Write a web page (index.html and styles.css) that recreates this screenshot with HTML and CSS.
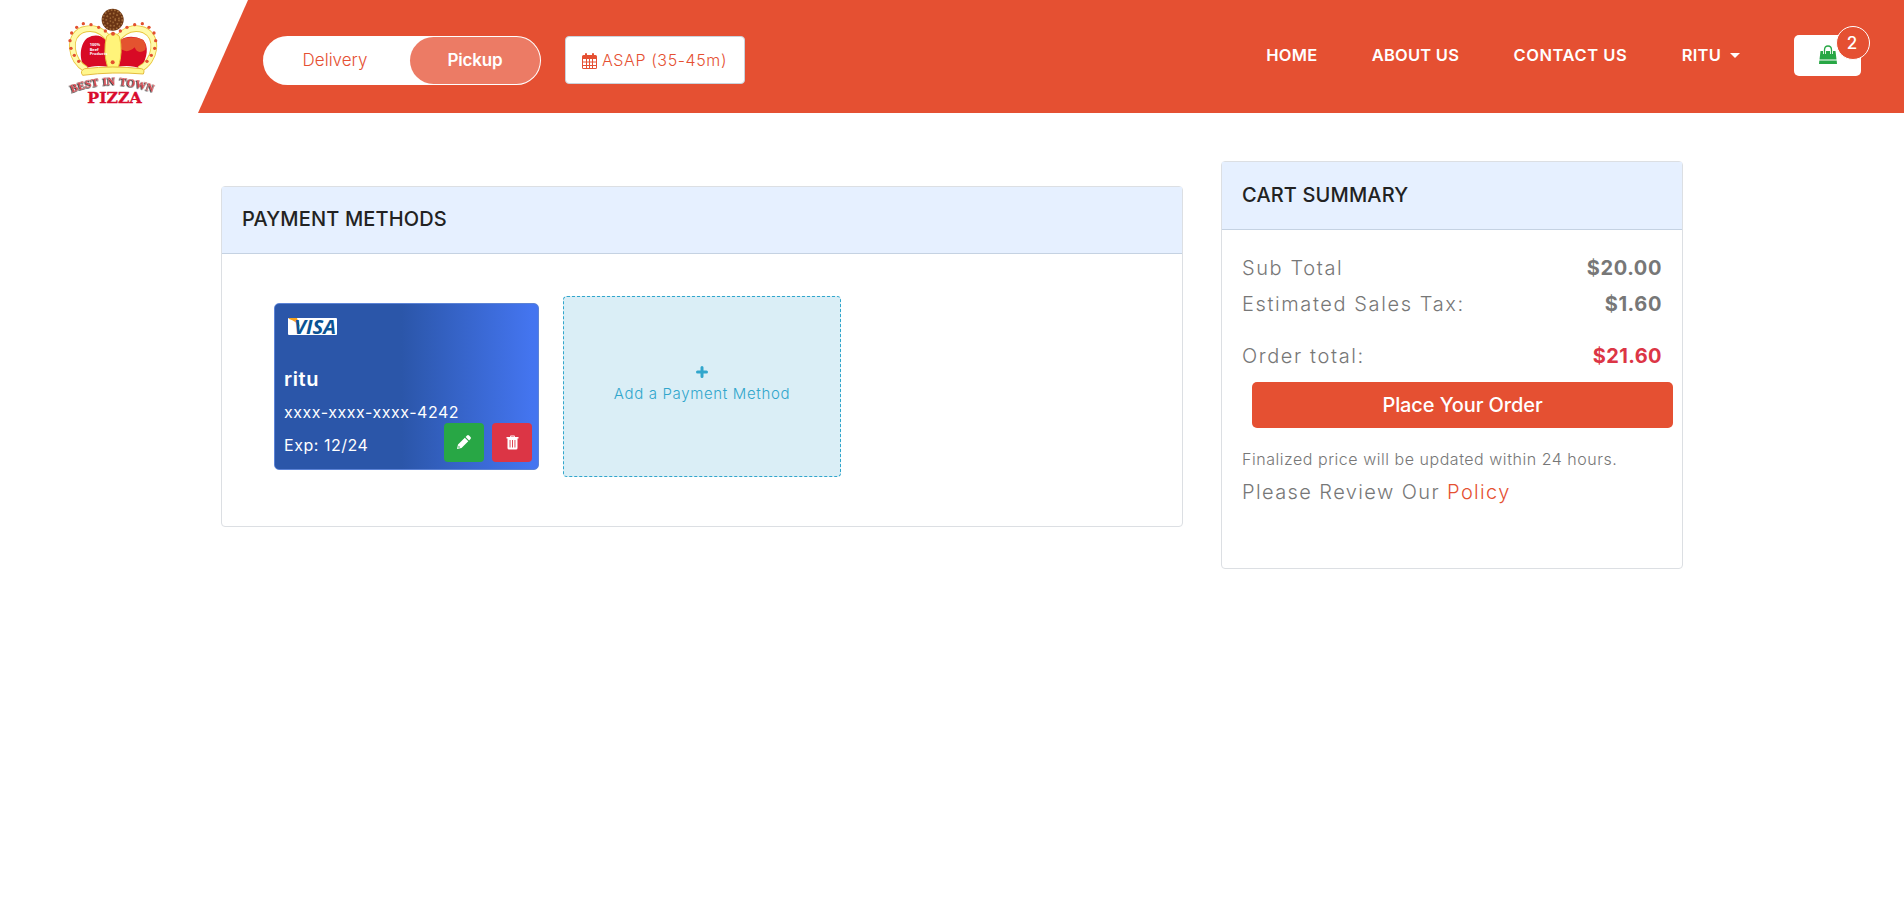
FILE: index.html
```html
<!DOCTYPE html>
<html lang="en">
<head>
<meta charset="utf-8">
<title>Payment Methods</title>
<link rel="stylesheet" href="styles.css">
</head>
<body>
<header class="topbar">
  <a class="logo">
    <svg width="130" height="113" viewBox="0 0 390 339">
      <circle cx="188" cy="59" r="33" fill="#6b3514"/>
      <circle cx="188" cy="59" r="29" fill="none" stroke="#a06a38" stroke-width="5" stroke-dasharray="5 5"/>
      <circle cx="188" cy="59" r="19" fill="none" stroke="#a06a38" stroke-width="5" stroke-dasharray="5 6"/>
      <circle cx="188" cy="59" r="8" fill="none" stroke="#a06a38" stroke-width="5" stroke-dasharray="4 5"/>
      <path d="M104 206 C84 170 92 130 112 114 Q145 96 170 122 L174 200 Q130 194 104 206Z" fill="#d80a25"/>
      <path d="M272 206 C294 170 296 140 280 120 Q240 100 207 122 L203 200 Q245 194 272 206Z" fill="#d80a25"/>
      <path d="M208 120 Q240 104 276 118 Q292 130 286 150 Q262 165 254 142 Q230 165 206 142Z" fill="#e4532f"/>
      <path d="M108 208 C60 180 52 110 96 90 Q150 72 184 128 M268 208 C318 182 328 112 282 90 Q230 72 194 128" fill="none" stroke="#e9c53c" stroke-width="20"/>
      <path d="M108 208 C60 180 52 110 96 90 Q150 72 184 128 M268 208 C318 182 328 112 282 90 Q230 72 194 128" fill="none" stroke="#fffaa8" stroke-width="15"/>
      <path d="M170 109 Q189 90 208 109 Q220 155 205 202 L173 202 Q158 155 170 109Z" fill="#fff47a" stroke="#e9c53c" stroke-width="3"/>
      <path d="M104 206 Q188 196 274 206 Q286 209 280 222 Q188 214 98 226 Q88 213 104 206Z" fill="#fff68c" stroke="#e5bc3e" stroke-width="3"/>
      <g fill="#e2502e"><circle cx="189" cy="101" r="6"/><circle cx="188" cy="187" r="6"/><circle cx="166" cy="93" r="5"/><circle cx="146" cy="82" r="5"/><circle cx="123" cy="74" r="5"/><circle cx="100" cy="71" r="5"/><circle cx="80" cy="82" r="5"/><circle cx="65" cy="99" r="5"/><circle cx="60" cy="122" r="5"/><circle cx="63" cy="145" r="5"/><circle cx="73" cy="166" r="5"/><circle cx="86" cy="184" r="5"/><circle cx="211" cy="93" r="5"/><circle cx="231" cy="82" r="5"/><circle cx="254" cy="74" r="5"/><circle cx="277" cy="71" r="5"/><circle cx="297" cy="82" r="5"/><circle cx="312" cy="99" r="5"/><circle cx="317" cy="122" r="5"/><circle cx="314" cy="145" r="5"/><circle cx="304" cy="166" r="5"/><circle cx="291" cy="184" r="5"/></g>
      <g class="logo-note"><text x="119" y="138">100%</text><text x="119" y="152">Beef</text><text x="119" y="166">Products</text></g>
      <path id="arc" d="M66 278 Q188 230 322 281" fill="none"/>
      <text class="logo-arc"><textPath href="#arc">BEST IN TOWN</textPath></text>
      <text class="logo-name" x="112" y="308" textLength="163" lengthAdjust="spacingAndGlyphs">PIZZA</text>
    </svg>
  </a>
  <div class="bar">
    <div class="toggle"><span class="opt">Delivery</span><span class="opt on">Pickup</span></div>
    <button class="asap"><svg width="15" height="16" viewBox="0 0 15 16"><path fill="#e55032" fill-rule="evenodd" d="M0 3.5Q0 2 1.500 2H3V1Q3 0 4 0T5 1V2H10V1Q10 0 11 0T12 1V2H13.500Q15 2 15 3.500V14.500Q15 16 13.500 16H1.500Q0 16 0 14.500ZM1 6V8.500H4V6ZM5 6V8.500H7V6ZM8 6V8.500H10V6ZM11 6V8.500H14V6ZM1 9.500V12H4V9.500ZM5 9.500V12H7V9.500ZM8 9.500V12H10V9.500ZM11 9.500V12H14V9.500ZM1 13V15H4V13ZM5 13V15H7V13ZM8 13V15H10V13ZM11 13V15H14V13Z"/></svg><span class="asap-text">ASAP (35-45m)</span></button>
    <nav class="nav"><a>HOME</a><a>ABOUT US</a><a class="wide">CONTACT US</a><a class="user">RITU<i class="caret"></i></a></nav>
    <a class="bag"><svg width="20" height="20" viewBox="0 0 20 20"><path d="M2.500 6H17.500L18.500 14.500H1.500Z M1.300 15.500H18.700L19 19H1Z" fill="#28a745"/><path d="M6.500 9V5Q6.500 1 10 1T13.500 5V9" fill="none" stroke="#fff" stroke-width="3"/><path d="M6.500 9V5Q6.500 1 10 1T13.500 5V9" fill="none" stroke="#28a745" stroke-width="1.300"/></svg><b class="badge">2</b></a>
  </div>
</header>
<main class="page">
  <section class="panel pay">
    <h2 class="head">PAYMENT METHODS</h2>
    <div class="methods">
      <article class="card">
        <svg class="visa" width="49" height="17" viewBox="0 0 49 17"><rect width="49" height="17" rx="1" fill="#fff"/><path d="M1 0H9L12 9Q8 3 1 1Z" fill="#f5a11c"/><text x="6" y="15.500" textLength="42" lengthAdjust="spacingAndGlyphs">VISA</text></svg>
        <div class="holder">ritu</div>
        <div class="line">xxxx-xxxx-xxxx-4242</div>
        <div class="line">Exp: 12/24</div>
        <div class="tools">
          <button class="tool edit"><svg width="14" height="14" viewBox="0 0 14 14"><path fill="#fff" fill-rule="evenodd" d="M0 14L1 9.500L7.800 2.700L11.300 6.200L4.500 13ZM1.700 10.800L1.300 12.700L3.200 12.300ZM8.600 1.900L10 .5Q11 -.3 12 .5L13.500 2Q14.300 3 13.500 4L12.100 5.400Z"/></svg></button>
          <button class="tool del"><svg width="13" height="15" viewBox="0 0 13 15"><path fill="#fff" fill-rule="evenodd" d="M4 2L4.500 .5H8.500L9 2H12.500V3.500H11.500V13Q11.500 14.500 10 14.500H3Q1.500 14.500 1.500 13V3.500H.5V2ZM5 2H8L7.800 1.400H5.200ZM3.600 5V12.500H4.500V5ZM6.050 5V12.500H6.950V5ZM8.500 5V12.500H9.400V5Z"/></svg></button>
        </div>
      </article>
      <a class="add"><svg width="12" height="12" viewBox="0 0 12 12"><path d="M6 1.500V10.500M1.500 6H10.500" stroke="#31a6cc" stroke-width="3" stroke-linecap="round"/></svg>Add a Payment Method</a>
    </div>
  </section>
  <section class="panel cart">
    <h2 class="head">CART SUMMARY</h2>
    <div class="sum">
      <div class="row"><span>Sub Total</span><b>$20.00</b></div>
      <div class="row"><span>Estimated Sales Tax:</span><b>$1.60</b></div>
      <div class="row total"><span>Order total:</span><b>$21.60</b></div>
      <button class="place">Place Your Order</button>
      <p class="note">Finalized price will be updated within 24 hours.</p>
      <p class="policy">Please Review Our <a>Policy</a></p>
    </div>
  </section>
</main>
</body>
</html>
```
FILE: styles.css
```css
* { box-sizing: border-box; }
body { margin: 0; background: #fff; color: #777; font-family: Inter, "Open Sans", sans-serif; font-size: 16px; }
button { font: inherit; border: 0; padding: 0; }
h2, p { margin: 0; }
svg { display: block; flex: none; }
span, b, a, button, p { white-space: nowrap; }

.topbar { display: flex; height: 113px; }
.logo { width: 148px; margin-left: 50px; }
.logo-note { font: bold 12px "Open Sans", sans-serif; fill: #fff; }
.logo-arc { font: bold 33px "Liberation Serif", serif; fill: #d9444e; stroke: #e8a0a0; stroke-width: .8px; word-spacing: 4px; filter: drop-shadow(-2px 2px 0 #111); }
.logo-name { font: bold 43px "DejaVu Serif", serif; fill: #d90b2d; stroke: #d90b2d; stroke-width: 1px; }
.bar { flex: 1; display: flex; align-items: flex-start; background: #e55032; padding: 36px 34px 0 65px; clip-path: polygon(50px 0, 100% 0, 100% 100%, 0 100%); }

.toggle { display: flex; width: 278px; height: 49px; padding: 1px; background: #fff; border-radius: 25px; color: #e55032; font-size: 17px; font-weight: 300; }
.opt { width: 146px; display: flex; align-items: center; justify-content: center; padding: 0 4px 2px 0; }
.opt.on { width: 130px; padding-right: 0; background: #ec7b65; color: #fff; border-radius: 25px; font-weight: 600; letter-spacing: -.15px; }
.asap { display: flex; align-items: center; gap: 5px; width: 180px; height: 48px; margin-left: 24px; padding-left: 16px; background: #fff; border: 1px solid #c9d3dc; border-radius: 4px; color: #e55032; font-weight: 300; letter-spacing: .6px; }
.asap svg { margin-top: 2px; }
.asap-text { margin-bottom: 1px; }
.nav { display: flex; gap: 54.5px; margin-left: auto; color: #fff; font-size: 16.5px; font-weight: 600; line-height: 38px; letter-spacing: .2px; }
.wide { letter-spacing: .55px; }
.user { display: flex; align-items: center; gap: 9px; }
.caret { border: 5px solid transparent; border-top-color: #fff; border-bottom: 0; }
.bag { position: relative; width: 67px; height: 41px; margin: -1px 9px 0 54px; background: #fff; border-radius: 5px; padding: 10px 24px; }
.badge { position: absolute; left: 42px; top: -9px; width: 34px; height: 34px; border: 1px solid #fff; border-radius: 50%; background: #e55032; color: #fff; font-size: 17px; font-weight: 500; line-height: 32px; text-align: center; padding-right: 2px; }

.page { display: flex; align-items: flex-start; gap: 38px; padding: 48px 0 0 221px; }
.panel { border: 1px solid #dcdfe3; border-radius: 4px; }
.head { height: 68px; padding-left: 20px; background: #e6f0ff; border-bottom: 1px solid #c5d2e2; color: #222; font-size: 20px; font-weight: 500; line-height: 66px; letter-spacing: .15px; }
.pay { width: 962px; height: 341px; margin-top: 25px; }
.pay .head { height: 67px; line-height: 65px; }
.methods { display: flex; gap: 24px; padding: 42px 0 0 52px; }
.card { position: relative; width: 265px; height: 167px; margin-top: 7px; padding: 14px 9px 0; border-radius: 5px; background: linear-gradient(90deg, #2b56a9 0 48%, #4475f0 98%); border: 1px solid #5c83d6; color: #fff; font-weight: 400; }
.visa { margin-left: 4px; font: italic bold 19px "Open Sans", sans-serif; }
.visa text { fill: #0b5394; }
.holder { margin: 29px 0 1px; font-size: 20px; font-weight: 600; line-height: 31px; letter-spacing: .58px; }
.line { line-height: 33px; letter-spacing: .53px; }
.tools { position: absolute; right: 6px; bottom: 7.500px; display: flex; gap: 8px; }
.tool { width: 40px; height: 39px; display: flex; align-items: center; justify-content: center; border-radius: 4px; }
.edit { background: #28a745; }
.del { background: #dc3545; }
.add { display: flex; flex-direction: column; align-items: center; width: 278px; height: 181px; padding-top: 69px; border: 1px dashed #31a6cc; border-radius: 4px; background: #daeef6; color: #31a6cc; font-size: 15px; font-weight: 300; line-height: 31px; letter-spacing: .65px; }

.cart { width: 462px; height: 408px; }
.sum { padding: 20px 20px 0; font-size: 20px; font-weight: 300; line-height: 36px; letter-spacing: 1.6px; }
.row { display: flex; justify-content: space-between; }
.row b { font-weight: 700; letter-spacing: .6px; }
.total { margin-top: 16px; }
.total b { color: #dc3545; letter-spacing: .4px; }
.place { display: block; width: 421px; height: 46px; margin: 8px 0 0 10px; border-radius: 5px; background: #e55032; color: #fff; font-size: 20px; font-weight: 500; letter-spacing: -.1px; }
.note { margin-top: 16px; font-size: 16px; line-height: 30px; letter-spacing: .53px; }
.policy { line-height: 36px; letter-spacing: 1.4px; }
.policy a { color: #e55032; letter-spacing: 1.35px; }
```
